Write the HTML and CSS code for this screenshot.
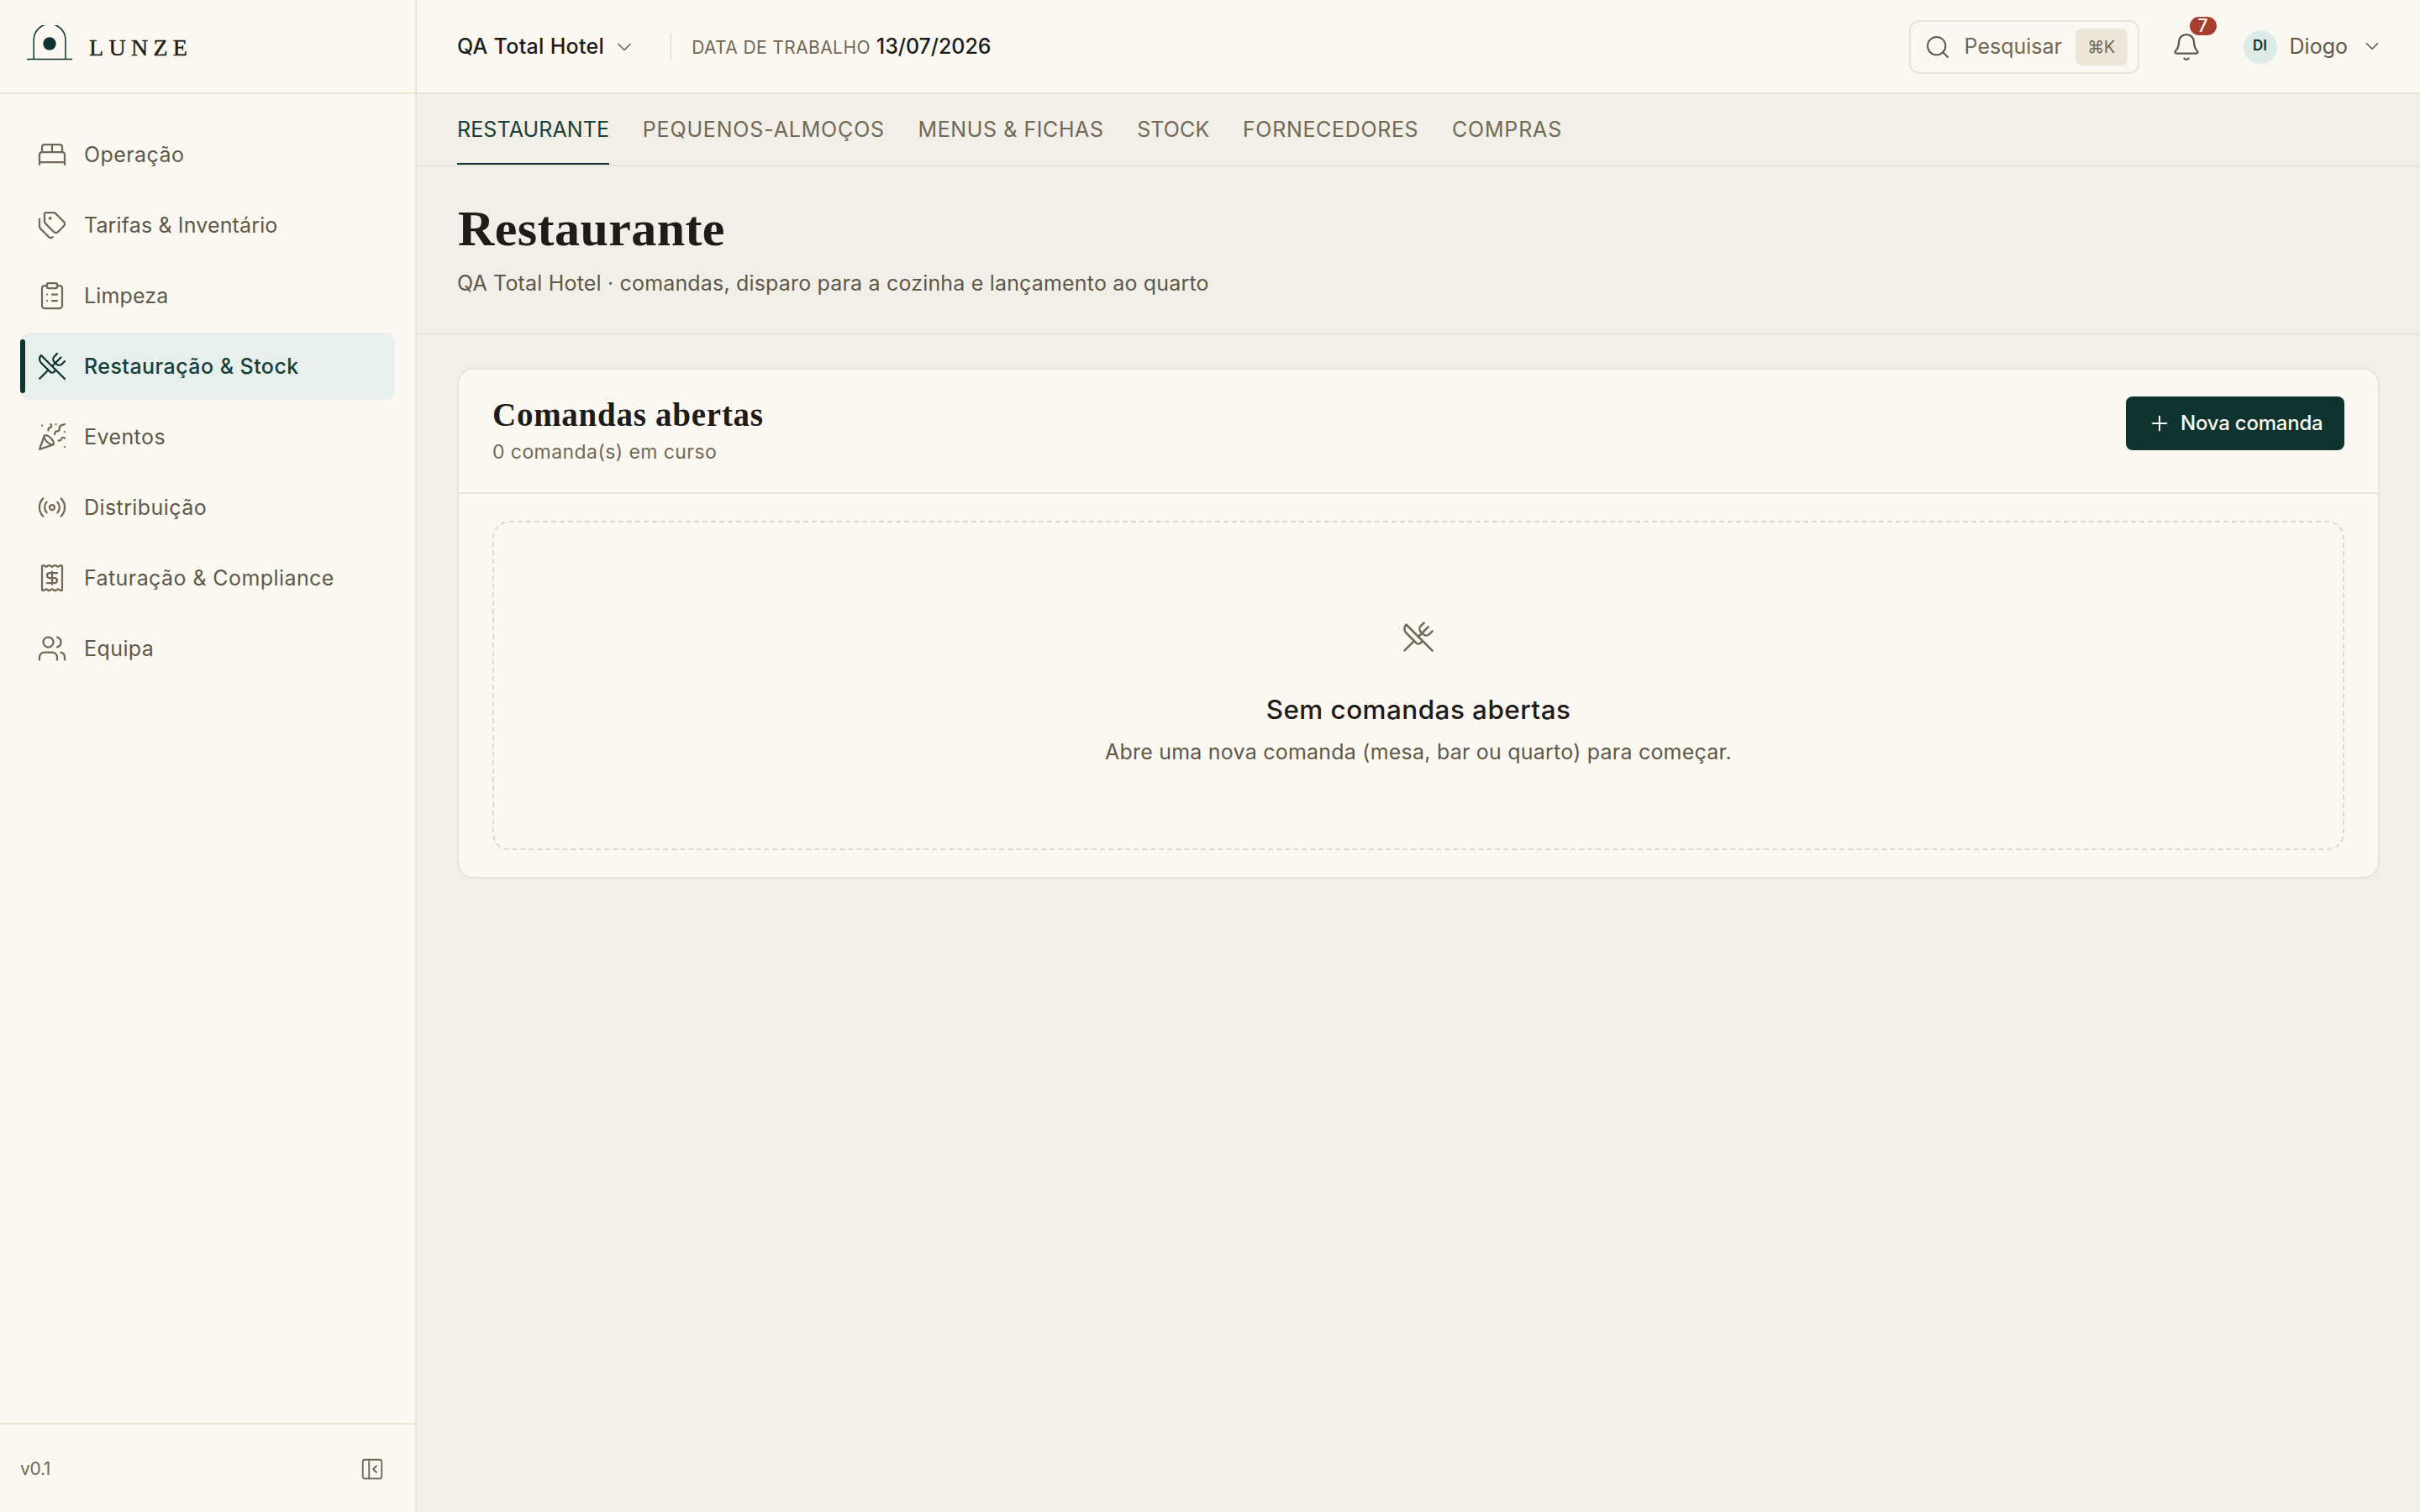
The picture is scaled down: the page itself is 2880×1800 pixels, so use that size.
FILE: index.html
```html
<!DOCTYPE html>
<html lang="pt">
<head>
<meta charset="utf-8">
<title>Restaurante · Lunze</title>
<link rel="stylesheet" href="styles.css">
</head>
<body>
<div class="app">
  <aside class="sidebar">
    <div class="brand">
      <svg class="brand-mark" viewBox="0 0 54 42"><path d="M8.2 40.5V17.5a18.9 18.9 0 0 1 37.8 0V40.5"/><path d="M0 40.5h54"/><circle cx="27" cy="22" r="7.7"/></svg>
      <span class="brand-name">LUNZE</span>
    </div>
    <nav class="nav">
      <a class="nav-item"><svg class="icon" viewBox="0 0 24 24"><path d="M2 20v-8a2 2 0 0 1 2-2h16a2 2 0 0 1 2 2v8"/><path d="M4 10V6a2 2 0 0 1 2-2h12a2 2 0 0 1 2 2v4"/><path d="M12 4v6"/><path d="M2 18h20"/></svg><span class="nav-label">Operação</span></a>
      <a class="nav-item"><svg class="icon" viewBox="0 0 24 24"><path d="M13.172 2a2 2 0 0 1 1.414.586l6.71 6.71a2.4 2.4 0 0 1 0 3.408l-4.592 4.592a2.4 2.4 0 0 1-3.408 0l-6.71-6.71A2 2 0 0 1 6 9.172V3a1 1 0 0 1 1-1z"/><path d="M2 7v6.172a2 2 0 0 0 .586 1.414l6.71 6.71a2.4 2.4 0 0 0 3.191.193"/><circle cx="10.5" cy="6.5" r=".5" fill="currentColor"/></svg><span class="nav-label nav-label-tight">Tarifas &amp; Inventário</span></a>
      <a class="nav-item"><svg class="icon" viewBox="0 0 24 24"><rect x="8" y="2" width="8" height="4" rx="1"/><path d="M16 4h2a2 2 0 0 1 2 2v14a2 2 0 0 1-2 2H6a2 2 0 0 1-2-2V6a2 2 0 0 1 2-2h2"/><path d="M12 11h4"/><path d="M12 16h4"/><path d="M8 11h.01"/><path d="M8 16h.01"/></svg><span class="nav-label nav-label-tight">Limpeza</span></a>
      <a class="nav-item is-active"><svg class="icon" viewBox="0 0 24 24"><path d="m16 2-2.3 2.3a3 3 0 0 0 0 4.2l1.8 1.8a3 3 0 0 0 4.2 0L22 8"/><path d="M15 15 3.3 3.3a4.2 4.2 0 0 0 0 6l7.3 7.3c.7.7 2 .7 2.8 0L15 15Zm0 0 7 7"/><path d="m2.1 21.8 6.4-6.3"/><path d="m19 5-7 7"/></svg><span class="nav-label">Restauração &amp; Stock</span></a>
      <a class="nav-item"><svg class="icon" viewBox="0 0 24 24"><path d="M5.8 11.3 2 22l10.7-3.79"/><path d="M4 3h.01"/><path d="M22 8h.01"/><path d="M15 2h.01"/><path d="M22 20h.01"/><path d="m22 2-2.24.75a2.9 2.9 0 0 0-1.96 3.12c.1.86-.57 1.63-1.45 1.63h-.38c-.86 0-1.6.6-1.76 1.44L14 10"/><path d="m22 13-.82-.33c-.86-.34-1.82.2-1.98 1.11c-.11.7-.72 1.22-1.43 1.22H17"/><path d="m11 2 .33.82c.34.86-.2 1.82-1.11 1.98C9.52 4.9 9 5.52 9 6.23V7"/><path d="M11 13c1.93 1.93 2.83 4.17 2 5-.83.83-3.07-.07-5-2-1.93-1.93-2.83-4.17-2-5 .83-.83 3.07.07 5 2Z"/></svg><span class="nav-label">Eventos</span></a>
      <a class="nav-item"><svg class="icon" viewBox="0 0 24 24"><path d="M4.9 19.1C1 15.2 1 8.8 4.9 4.9"/><path d="M7.8 16.2c-2.3-2.3-2.3-6.1 0-8.5"/><circle cx="12" cy="12" r="2"/><path d="M16.2 7.8c2.3 2.3 2.3 6.1 0 8.5"/><path d="M19.1 4.9C23 8.8 23 15.1 19.1 19"/></svg><span class="nav-label">Distribuição</span></a>
      <a class="nav-item"><svg class="icon" viewBox="0 0 24 24"><path d="M4 3a1 1 0 0 1 1-1 1.3 1.3 0 0 1 .7.2l.933.6a1.3 1.3 0 0 0 1.4 0l.934-.6a1.3 1.3 0 0 1 1.4 0l.933.6a1.3 1.3 0 0 0 1.4 0l.933-.6a1.3 1.3 0 0 1 1.4 0l.934.6a1.3 1.3 0 0 0 1.4 0l.933-.6A1.3 1.3 0 0 1 19 2a1 1 0 0 1 1 1v18a1 1 0 0 1-1 1 1.3 1.3 0 0 1-.7-.2l-.933-.6a1.3 1.3 0 0 0-1.4 0l-.934.6a1.3 1.3 0 0 1-1.4 0l-.933-.6a1.3 1.3 0 0 0-1.4 0l-.933.6a1.3 1.3 0 0 1-1.4 0l-.934-.6a1.3 1.3 0 0 0-1.4 0l-.933.6a1.3 1.3 0 0 1-.7.2 1 1 0 0 1-1-1z"/><path d="M12 17V7"/><path d="M16 8h-6a2 2 0 0 0 0 4h4a2 2 0 0 1 0 4H8"/></svg><span class="nav-label">Faturação &amp; Compliance</span></a>
      <a class="nav-item"><svg class="icon" viewBox="0 0 24 24"><path d="M16 21v-2a4 4 0 0 0-4-4H6a4 4 0 0 0-4 4v2"/><circle cx="9" cy="7" r="4"/><path d="M22 21v-2a4 4 0 0 0-3-3.87"/><path d="M16 3.13a4 4 0 0 1 0 7.75"/></svg><span class="nav-label">Equipa</span></a>
    </nav>
    <div class="sidebar-foot">
      <span class="version">v0.1</span>
      <svg class="icon icon-panel" viewBox="0 0 24 24"><rect x="3" y="3" width="18" height="18" rx="2"/><path d="M9 3v18"/><path d="m16 15-3-3 3-3"/></svg>
    </div>
  </aside>

  <div class="main">
    <header class="topbar">
      <button class="hotel"><span class="hotel-name">QA Total Hotel</span><svg class="icon icon-chevron" viewBox="0 0 24 24"><path d="m6 9 6 6 6-6"/></svg></button>
      <div class="divider"></div>
      <div class="workdate"><span class="workdate-label">DATA DE TRABALHO</span><span class="workdate-value">13/07/2026</span></div>
      <div class="spacer"></div>
      <button class="search"><svg class="icon icon-search" viewBox="0 0 24 24"><circle cx="11" cy="11" r="8"/><path d="m21 21-4.3-4.3"/></svg><span class="search-label">Pesquisar</span><kbd class="kbd">⌘K</kbd></button>
      <div class="bell"><svg class="icon" viewBox="0 0 24 24"><path d="M10.268 21a2 2 0 0 0 3.464 0"/><path d="M3.262 15.326A1 1 0 0 0 4 17h16a1 1 0 0 0 .74-1.673C19.41 13.956 18 12.499 18 8A6 6 0 0 0 6 8c0 4.499-1.411 5.956-2.738 7.326"/></svg><span class="badge">7</span></div>
      <button class="user"><span class="avatar">DI</span><span class="user-name">Diogo</span><svg class="icon icon-user-chevron" viewBox="0 0 24 24"><path d="m6 9 6 6 6-6"/></svg></button>
    </header>

    <nav class="tabs">
      <a class="tab is-current">RESTAURANTE</a>
      <a class="tab tab-wide">PEQUENOS-ALMOÇOS</a>
      <a class="tab tab-menus">MENUS &amp; FICHAS</a>
      <a class="tab">STOCK</a>
      <a class="tab tab-suppliers">FORNECEDORES</a>
      <a class="tab tab-wide">COMPRAS</a>
    </nav>

    <section class="page-head">
      <h1 class="page-title">Restaurante</h1>
      <p class="page-sub">QA Total Hotel · comandas, disparo para a cozinha e lançamento ao quarto</p>
    </section>

    <main class="content">
      <section class="card">
        <div class="card-head">
          <div>
            <h2 class="card-title">Comandas abertas</h2>
            <p class="card-sub">0 comanda(s) em curso</p>
          </div>
          <button class="primary"><svg class="icon icon-plus" viewBox="0 0 24 24"><path d="M5 12h14"/><path d="M12 5v14"/></svg><span>Nova comanda</span></button>
        </div>
        <div class="card-body">
          <div class="empty">
            <svg class="icon icon-empty" viewBox="0 0 24 24"><path d="m16 2-2.3 2.3a3 3 0 0 0 0 4.2l1.8 1.8a3 3 0 0 0 4.2 0L22 8"/><path d="M15 15 3.3 3.3a4.2 4.2 0 0 0 0 6l7.3 7.3c.7.7 2 .7 2.8 0L15 15Zm0 0 7 7"/><path d="m2.1 21.8 6.4-6.3"/><path d="m19 5-7 7"/></svg>
            <h3 class="empty-title">Sem comandas abertas</h3>
            <p class="empty-text">Abre uma nova comanda (mesa, bar ou quarto) para começar.</p>
          </div>
        </div>
      </section>
    </main>
  </div>
</div>
</body>
</html>
```
FILE: styles.css
```css
:root {
  --surface: #fbf8f1;
  --canvas: #f2efe8;
  --line: #eae4d6;
  --ink: #1d1c19;
  --text: #5e5848;
  --muted: #716856;
  --brand: #0f332f;
}

* { box-sizing: border-box; }

body {
  margin: 0;
  background: var(--canvas);
  color: var(--ink);
  font-family: Inter, "Liberation Sans", sans-serif;
  font-size: 25px;
  line-height: 40px;
}

h1, h2, h3, p { margin: 0; }

button {
  display: flex;
  align-items: center;
  padding: 0;
  border: 0;
  background: none;
  color: inherit;
  font: inherit;
}

span, a, h1, h2, h3, p { white-space: nowrap; }

.icon {
  display: block;
  flex: none;
  width: 36px;
  height: 36px;
  fill: none;
  stroke: currentColor;
  stroke-width: 1.5;
  stroke-linecap: round;
  stroke-linejoin: round;
}

.app { display: flex; height: 1800px; }

/* Sidebar */
.sidebar {
  display: flex;
  flex-direction: column;
  flex: none;
  width: 496px;
  border-right: 2px solid var(--line);
  background: var(--surface);
}

.brand {
  display: flex;
  align-items: flex-start;
  gap: 20px;
  height: 112px;
  padding: 30px 32px 0;
  border-bottom: 2px solid var(--line);
}

.brand-mark {
  width: 54px;
  height: 42px;
  fill: none;
  stroke: var(--brand);
  stroke-width: 1.5;
}

.brand-mark circle { fill: var(--brand); stroke: none; }

.brand-name {
  padding-top: 7px;
  font: 400 28px/40px "Liberation Serif", serif;
  letter-spacing: 6.3px;
  -webkit-text-stroke: 0.4px currentColor;
}

.nav {
  display: flex;
  flex-direction: column;
  gap: 4px;
  flex: 1;
  padding: 32px 24px;
}

.nav-item {
  position: relative;
  display: flex;
  align-items: center;
  gap: 20px;
  height: 80px;
  padding-left: 20px;
  border-radius: 12px;
  color: var(--muted);
}

.nav-label {
  padding-bottom: 1px;
  color: var(--text);
  letter-spacing: 0.42px;
}

.nav-label-tight { letter-spacing: 0.14px; }

.nav-item.is-active { background: #e7f0ed; color: var(--brand); }
.nav-item.is-active .nav-label { color: #17403b; font-weight: 500; letter-spacing: 0.45px; }

.nav-item.is-active::before {
  content: "";
  position: absolute;
  left: 0;
  top: 8px;
  width: 6px;
  height: 64px;
  border-radius: 3px;
  background: var(--brand);
}

.sidebar-foot {
  display: flex;
  align-items: center;
  justify-content: space-between;
  height: 106px;
  padding: 2px 36px 0 24px;
  border-top: 2px solid var(--line);
  color: var(--muted);
}

.version { font-size: 21px; letter-spacing: -0.3px; }
.icon-panel { width: 30px; height: 30px; }

/* Top bar */
.main { flex: 1; min-width: 0; }

.topbar {
  display: flex;
  align-items: center;
  height: 112px;
  padding: 2px 44px 0 48px;
  border-bottom: 2px solid var(--line);
  background: var(--surface);
}

.hotel { gap: 10px; }
.hotel-name { padding-bottom: 2px; font-weight: 500; letter-spacing: 0.3px; }
.icon-chevron { width: 28px; height: 28px; color: var(--muted); }

.divider {
  width: 2px;
  height: 32px;
  margin: 0 24px 0 40px;
  background: var(--line);
}

.workdate {
  display: flex;
  align-items: baseline;
  gap: 7px;
  padding-bottom: 1px;
}

.workdate-label { color: var(--muted); font-size: 21px; letter-spacing: 0.4px; }
.workdate-value { font-weight: 500; letter-spacing: -0.05px; }
.spacer { flex: 1; }

.search {
  width: 274px;
  height: 64px;
  padding: 0 12px 0 16px;
  border: 2px solid var(--line);
  border-radius: 12px;
  color: var(--text);
}

.icon-search { width: 32px; height: 32px; margin-right: 16px; }
.search-label { padding-bottom: 2px; color: var(--muted); }

.kbd {
  width: 62px;
  height: 44px;
  margin-left: auto;
  border-radius: 8px;
  background: #ece5d8;
  color: var(--muted);
  font: 400 20px/45px Inter, "DejaVu Sans", sans-serif;
  letter-spacing: -0.5px;
  text-align: center;
}

.bell { position: relative; margin-left: 38px; color: var(--text); }

.badge {
  position: absolute;
  left: 22px;
  top: -18px;
  width: 32px;
  height: 22px;
  border-radius: 11px;
  background: #a63f2e;
  color: #fff;
  font-size: 21px;
  font-weight: 500;
  line-height: 22px;
  text-align: center;
}

.user { margin-left: 50px; color: var(--text); }

.avatar {
  width: 40px;
  height: 40px;
  border-radius: 50%;
  background: #dcebe8;
  color: var(--brand);
  font-size: 17px;
  font-weight: 600;
  line-height: 36px;
  text-align: center;
}

.user-name { margin-left: 15px; padding-bottom: 2px; }
.icon-user-chevron { width: 26px; height: 26px; margin: 0 0 2px 16px; }

/* Tabs */
.tabs {
  display: flex;
  gap: 39.6px;
  height: 86px;
  padding: 0 48px;
  border-bottom: 2px solid var(--line);
}

.tab {
  height: 84px;
  padding-top: 22px;
  color: var(--muted);
  letter-spacing: 0.12px;
}

.tab.is-current { border-bottom: 2px solid var(--brand); color: #17403b; }
.tab-wide { letter-spacing: 0.83px; }
.tab-menus { letter-spacing: 0.58px; }
.tab-suppliers { letter-spacing: 0.66px; }

/* Page heading */
.page-head {
  height: 200px;
  padding: 40px 48px 0;
  border-bottom: 2px solid var(--line);
}

.page-title {
  padding-left: 1px;
  font: 700 60px/68px "Liberation Serif", serif;
  letter-spacing: 0.42px;
}

.page-sub { margin-top: 11px; color: var(--text); letter-spacing: 0.175px; }

/* Open orders card */
.content { padding: 40px 48px; }

.card {
  border: 2px solid var(--line);
  border-radius: 20px;
  background: var(--surface);
}

.card-head {
  display: flex;
  align-items: flex-start;
  justify-content: space-between;
  height: 148px;
  padding: 32px 40px 0;
  border-bottom: 2px solid var(--line);
}

.card-title {
  font: 700 39px/43px "Liberation Serif", serif;
  letter-spacing: 0.74px;
}

.card-sub {
  margin-top: 6px;
  color: var(--muted);
  font-size: 23px;
  line-height: 34px;
  letter-spacing: 0.425px;
}

.primary {
  gap: 11px;
  width: 260px;
  height: 64px;
  padding-left: 26px;
  border-radius: 8px;
  background: var(--brand);
  color: var(--surface);
  font-size: 24px;
  font-weight: 500;
  letter-spacing: -0.22px;
}

.icon-plus { width: 28px; height: 28px; stroke-width: 1.75; }
.card-body { padding: 32px 40px; }

.empty {
  display: flex;
  flex-direction: column;
  align-items: center;
  height: 392px;
  padding-top: 116px;
  border: 2px dashed #e0d9c8;
  border-radius: 20px;
}

.icon-empty { width: 40px; height: 40px; color: var(--muted); }

.empty-title {
  margin-top: 45px;
  font-size: 31.5px;
  font-weight: 550;
  line-height: 44px;
  letter-spacing: 0.42px;
}

.empty-text { margin-top: 8px; color: var(--text); letter-spacing: 0.218px; }
```
